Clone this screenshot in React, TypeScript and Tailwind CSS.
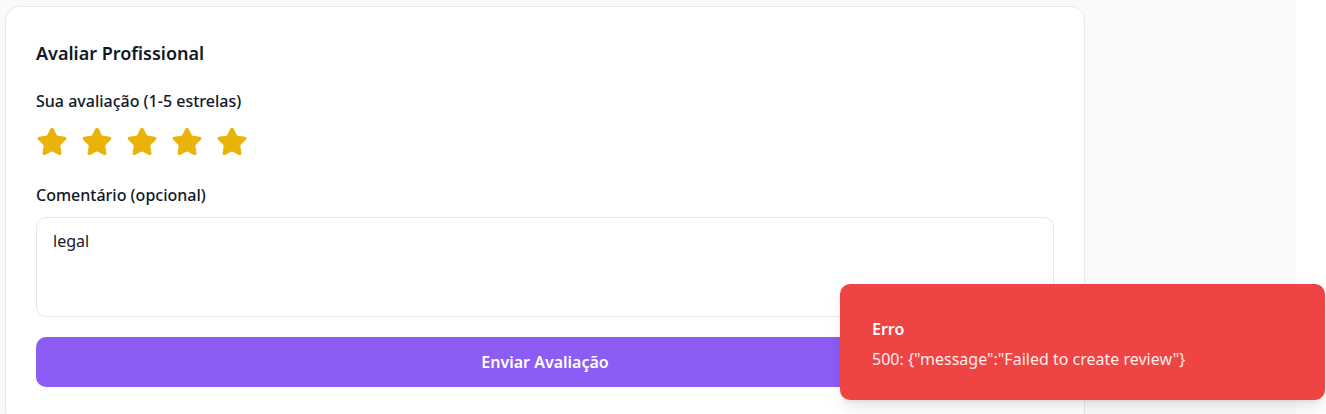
import { Star } from "lucide-react";

export default function App() {
  return (
    <div
      className="relative w-[1326px] h-[414px] overflow-hidden bg-white"
      style={{ fontFamily: '"Noto Sans", "Open Sans", sans-serif' }}
    >
      <div className="w-[1296px] h-full bg-gray-50 pl-[5px] pt-[6px]">
        <div className="w-[1080px] h-[420px] bg-white border border-gray-200 rounded-[14px] px-[30px] pt-8">
          <h2 className="text-[18px] leading-7 font-semibold text-gray-900">Avaliar Profissional</h2>

          <p className="mt-[22px] text-[16px] leading-6 font-medium text-gray-900">
            Sua avaliação (1-5 estrelas)
          </p>
          <div className="mt-[13px] flex items-center gap-[13px]">
            {[1, 2, 3, 4, 5].map((i) => (
              <button key={i} className="w-8 h-8 flex items-center justify-center">
                <Star className="w-8 h-8 text-[#eab308]" fill="#eab308" strokeWidth={1.5} />
              </button>
            ))}
          </div>

          <p className="mt-[25px] text-[16px] leading-6 font-medium text-gray-900">Comentário (opcional)</p>
          <div className="mt-[10px] h-[100px] border border-gray-200 rounded-[10px] px-4 py-[11px] text-[16px] leading-6 text-gray-900">
            legal
          </div>

          <button className="mt-5 w-full h-[50px] rounded-[10px] bg-[#8b5cf6] text-white text-[16px] font-semibold">
            Enviar Avaliação
          </button>
        </div>
      </div>

      <div className="absolute left-[840px] top-[284px] w-[485px] h-[116px] rounded-[10px] bg-[#ef4444] shadow-lg px-8 pt-[33px] text-white">
        <p className="text-[16px] leading-6 font-semibold">Erro</p>
        <p className="mt-[6px] text-[16px] leading-6 opacity-90">
          500: {'{"message":"Failed to create review"}'}
        </p>
      </div>
    </div>
  );
}
